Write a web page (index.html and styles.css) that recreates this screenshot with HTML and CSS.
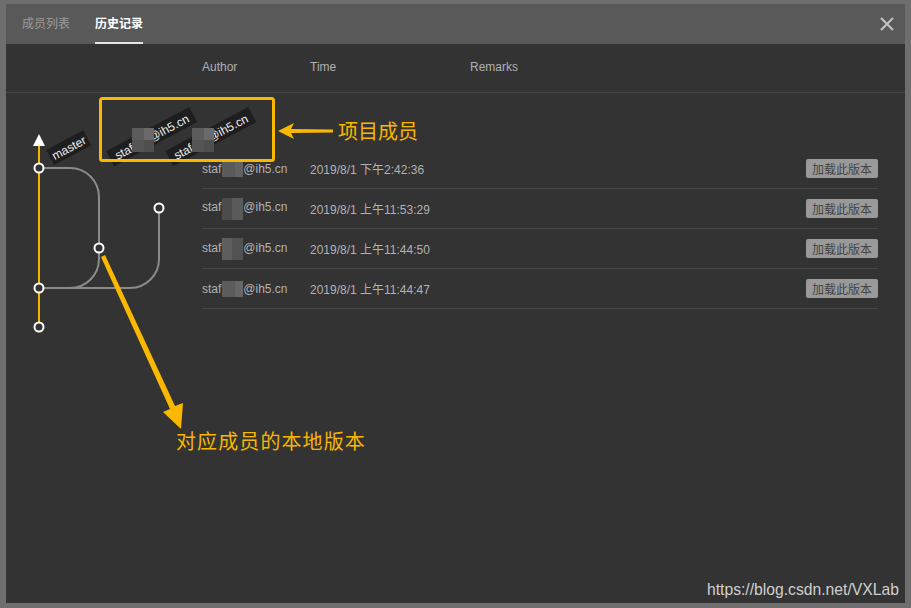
FILE: index.html
```html
<!DOCTYPE html>
<html lang="zh">
<head>
<meta charset="utf-8">
<title>历史记录</title>
<link rel="stylesheet" href="styles.css">
</head>
<body>
<div class="frame">
  <div class="dialog">
    <div class="header">
      <div class="tabs">
        <div class="tab">成员列表</div>
        <div class="tab active">历史记录</div>
      </div>
      <div class="close">
        <svg width="14" height="14" viewBox="0 0 14 14"><path d="M1 1L13 13M13 1L1 13" stroke="#c4c4c4" stroke-width="2" fill="none"/></svg>
      </div>
    </div>
    <div class="body">
      <div class="cols">
        <div class="c-author">Author</div>
        <div class="c-time">Time</div>
        <div class="c-remarks">Remarks</div>
      </div>
      <div class="rows">
        <div class="row">
          <div class="c-author">staf<span class="blur b1"></span>@ih5.cn</div>
          <div class="c-time">2019/8/1 下午2:42:36</div>
          <div class="c-btn"><span class="btn">加载此版本</span></div>
        </div>
        <div class="row">
          <div class="c-author">staf<span class="blur b2"></span>@ih5.cn</div>
          <div class="c-time">2019/8/1 上午11:53:29</div>
          <div class="c-btn"><span class="btn">加载此版本</span></div>
        </div>
        <div class="row">
          <div class="c-author">staf<span class="blur b3"></span>@ih5.cn</div>
          <div class="c-time">2019/8/1 上午11:44:50</div>
          <div class="c-btn"><span class="btn">加载此版本</span></div>
        </div>
        <div class="row">
          <div class="c-author">staf<span class="blur b4"></span>@ih5.cn</div>
          <div class="c-time">2019/8/1 上午11:44:47</div>
          <div class="c-btn"><span class="btn">加载此版本</span></div>
        </div>
      </div>
    </div>
  </div>

  <svg class="overlay" width="911" height="608" viewBox="0 0 911 608">
    <!-- gray branches -->
    <path d="M39 168 H70 A29 29 0 0 1 99 197 V259 A29 29 0 0 1 70 288" stroke="#8a8a8a" stroke-width="2" fill="none"/>
    <path d="M159 213 V259 A29 29 0 0 1 130 288 H39" stroke="#8a8a8a" stroke-width="2" fill="none"/>
    <!-- master line -->
    <line x1="39" y1="144" x2="39" y2="323" stroke="#f5b400" stroke-width="2"/>
    <polygon points="33,146 45,146 39,134" fill="#ffffff"/>
    <circle cx="39" cy="168" r="4.5" fill="#333" stroke="#fff" stroke-width="2"/>
    <circle cx="39" cy="288" r="4.5" fill="#333" stroke="#fff" stroke-width="2"/>
    <circle cx="39" cy="327" r="4.5" fill="#333" stroke="#fff" stroke-width="2"/>
    <circle cx="99" cy="248" r="4.5" fill="#333" stroke="#fff" stroke-width="2"/>
    <circle cx="159" cy="208" r="4.5" fill="#333" stroke="#fff" stroke-width="2"/>

    <!-- master tag -->
    <g transform="translate(69 148) rotate(-28)">
      <rect x="-21" y="-9" width="42" height="17" fill="#1e1e1e"/>
      <text x="0" y="4" text-anchor="middle" class="tagtext">master</text>
    </g>
    <!-- staff tags -->
    <g transform="translate(152 137) rotate(-28)">
      <rect x="-47" y="-9" width="94" height="17" fill="#1e1e1e"/>
      <text x="-41" y="4" class="tagtext">staf</text>
      <text x="41" y="4" text-anchor="end" class="tagtext">@ih5.cn</text>
    </g>
    <g transform="translate(211 137) rotate(-28)">
      <rect x="-47" y="-9" width="94" height="17" fill="#1e1e1e"/>
      <text x="-41" y="4" class="tagtext">staf</text>
      <text x="41" y="4" text-anchor="end" class="tagtext">@ih5.cn</text>
    </g>
    <rect x="132" y="128" width="12" height="12" fill="#5c5c5c"/>
    <rect x="144" y="128" width="10" height="12" fill="#6a6a6a"/>
    <rect x="132" y="140" width="12" height="12" fill="#555"/>
    <rect x="144" y="140" width="10" height="12" fill="#4f4f4f"/>
    <rect x="192" y="128" width="12" height="12" fill="#5c5c5c"/>
    <rect x="204" y="128" width="10" height="12" fill="#6a6a6a"/>
    <rect x="192" y="140" width="12" height="12" fill="#555"/>
    <rect x="204" y="140" width="10" height="12" fill="#4f4f4f"/>

    <!-- yellow box -->
    <rect x="100.5" y="98.5" width="173" height="62" rx="2" fill="none" stroke="#fbb800" stroke-width="3"/>

    <!-- small arrow -->
    <path d="M278 131 L294 123 L291 129 L333 129.5 L333 132.5 L291 133 L294 139 Z" fill="#fbb800"/>
    <!-- big arrow -->
    <path d="M101 257 L105 255 L175 406 L183 403 L181 429 L163 412 L170 409 Z" fill="#fbb800"/>
  </svg>

  <div class="note note-members">项目成员</div>
  <div class="note note-local">对应成员的本地版本</div>
  <div class="watermark">https://blog.csdn.net/VXLab</div>
</div>
</body>
</html>
```

FILE: styles.css
```css
* { box-sizing: border-box; }
html, body { margin: 0; padding: 0; }
body {
  width: 911px;
  height: 608px;
  overflow: hidden;
  background: #6e6e6e;
  font-family: "Liberation Sans", Arial, "Noto Sans CJK SC", sans-serif;
}
.frame {
  position: relative;
  width: 911px;
  height: 608px;
  padding: 4px 6px 5px 6px;
}
.dialog {
  width: 899px;
  height: 599px;
  background: #333333;
  display: flex;
  flex-direction: column;
}
.header {
  height: 40px;
  background: #595959;
  display: flex;
  align-items: stretch;
  justify-content: space-between;
}
.tabs {
  display: flex;
  padding-left: 16px;
  gap: 25px;
}
.tab {
  font-family: "Noto Sans CJK SC", sans-serif;
  font-size: 12px;
  color: #9c9c9c;
  line-height: 38px;
  border-bottom: 2px solid transparent;
}
.tab.active {
  color: #ffffff;
  font-weight: bold;
  border-bottom-color: #e6e6e6;
}
.close {
  width: 40px;
  display: flex;
  align-items: center;
  justify-content: center;
  margin-right: -2px;
}
.body {
  flex: 1;
  display: flex;
  flex-direction: column;
}
.cols {
  height: 49px;
  border-bottom: 1px solid #454545;
  display: flex;
  align-items: center;
  padding-left: 196px;
  padding-bottom: 2px;
  font-size: 12px;
  color: #b0b0b0;
}
.c-author { width: 108px; }
.c-time { width: 160px; }
.rows {
  margin-top: 56px;
  margin-left: 196px;
  width: 676px;
}
.row {
  height: 40px;
  border-bottom: 1px solid #474747;
  display: flex;
  align-items: center;
  font-size: 12px;
  color: #b2b2b2;
}
.c-btn {
  flex: 1;
  display: flex;
  justify-content: flex-end;
}
.btn {
  display: inline-block;
  height: 19px;
  line-height: 19px;
  padding: 0 6px;
  background: #9a9a9a;
  color: #454545;
  border-radius: 2px;
  font-family: "Noto Sans CJK SC", sans-serif;
  font-size: 12px;
}
.blur {
  display: inline-block;
  width: 21px;
  height: 16px;
  margin-left: 1px;
  vertical-align: -4px;
}
.b1 { background: linear-gradient(90deg, #5a5a5a 0 60%, #626262 60% 100%); }
.b2 { background: linear-gradient(90deg, #4c4c4c 0 50%, #5a5a5a 50% 100%); height: 22px; vertical-align: -9px; }
.b3 { background: linear-gradient(90deg, #5e5e5e 0 50%, #525252 50% 100%); height: 22px; vertical-align: -8px; }
.b4 { background: linear-gradient(90deg, #5c5c5c 0 60%, #666 60% 100%); }
.overlay {
  position: absolute;
  left: 0;
  top: 0;
  pointer-events: none;
}
.tagtext {
  font-family: "Liberation Sans", Arial, sans-serif;
  font-size: 12px;
  fill: #f0f0f0;
}
.note {
  position: absolute;
  font-family: "Noto Sans CJK SC", sans-serif;
  font-size: 20px;
  color: #f8b600;
  line-height: 24px;
  white-space: nowrap;
}
.note-members { left: 338px; top: 119px; }
.note-local { left: 176px; top: 429px; letter-spacing: 1.1px; }
.watermark {
  position: absolute;
  left: 707px;
  top: 580px;
  font-family: "Liberation Sans", Arial, sans-serif;
  font-size: 15.7px;
  color: #cfcfcf;
  line-height: 20px;
  white-space: nowrap;
}
```
